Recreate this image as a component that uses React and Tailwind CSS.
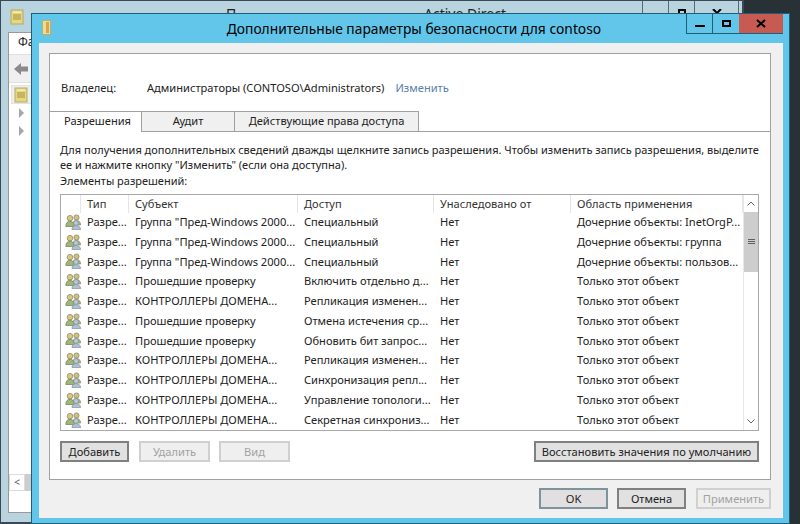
import React from 'react'

const rows = [
  ['Группа "Пред-Windows 2000...', 'Специальный', 'Дочерние объекты: InetOrgP...'],
  ['Группа "Пред-Windows 2000...', 'Специальный', 'Дочерние объекты: группа'],
  ['Группа "Пред-Windows 2000...', 'Специальный', 'Дочерние объекты: пользов...'],
  ['Прошедшие проверку', 'Включить отдельно д...', 'Только этот объект'],
  ['КОНТРОЛЛЕРЫ ДОМЕНА...', 'Репликация изменен...', 'Только этот объект'],
  ['Прошедшие проверку', 'Отмена истечения ср...', 'Только этот объект'],
  ['Прошедшие проверку', 'Обновить бит запрос...', 'Только этот объект'],
  ['КОНТРОЛЛЕРЫ ДОМЕНА...', 'Репликация изменен...', 'Только этот объект'],
  ['КОНТРОЛЛЕРЫ ДОМЕНА...', 'Синхронизация репл...', 'Только этот объект'],
  ['КОНТРОЛЛЕРЫ ДОМЕНА...', 'Управление топологи...', 'Только этот объект'],
  ['КОНТРОЛЛЕРЫ ДОМЕНА...', 'Секретная синхрониз...', 'Только этот объект'],
]

const cols = 'grid grid-cols-[20px_48px_169px_136px_137px_1fr]'

const UsersIcon = () => (
  <svg width="17" height="16" viewBox="0 0 17 16" className="blur-[0.3px]">
    <circle cx="11.5" cy="3.5" r="2.6" fill="#cfc083" stroke="#7c8260" strokeWidth="0.7" />
    <path d="M7.5 11c0-3 1.5-4.5 4-4.5s4 1.5 4 4.5z" fill="#adb986" stroke="#7c8260" strokeWidth="0.7" />
    <circle cx="5" cy="4.2" r="2.8" fill="#dcc680" stroke="#7c8260" strokeWidth="0.7" />
    <path d="M0.8 12.5c0-3.4 1.6-5.2 4.2-5.2s4.2 1.8 4.2 5.2z" fill="#a0b679" stroke="#6b8058" strokeWidth="0.7" />
    <circle cx="11" cy="9" r="2.4" fill="#bccad6" stroke="#7f8d9b" strokeWidth="0.7" />
    <path d="M7 15.6c0-2.6 1.6-4 4-4s4.6 1.4 4.6 4z" fill="#aec2d4" stroke="#7f8d9b" strokeWidth="0.7" />
  </svg>
)

const FolderIcon = ({ className }) => (
  <svg viewBox="0 0 14 16" className={className}>
    <rect x="1" y="1" width="12" height="14" fill="#e6d883" stroke="#b7aa62" />
    <rect x="3" y="5" width="8" height="6" fill="#c4b560" />
    <rect x="3" y="2.5" width="8" height="1.2" fill="#f8f2c4" />
  </svg>
)

const FolderSide = ({ className }) => (
  <svg viewBox="0 0 9 15" className={className}>
    <rect x="0.5" y="0.5" width="8" height="14" fill="#e9e08f" stroke="#b9b06a" />
    <rect x="4" y="2" width="3" height="11" fill="#e0a24e" />
  </svg>
)

const Btn = ({ children, w, kind }) => {
  const look =
    kind === 'off'
      ? 'border-[#d0d0d0] bg-[#efefef] text-[#a2a2a2]'
      : kind === 'ok'
        ? 'border-[#7f939f] bg-[#e1dfdf] text-[#222]'
        : 'border-[#808080] bg-[#e1e1e1] text-[#222]'
  return (
    <button className={`${w} h-[21px] border-2 flex items-center justify-center ${look}`}>{children}</button>
  )
}

export default function App() {
  return (
    <div className="relative w-[800px] h-[524px] overflow-hidden bg-[#283136] font-['Noto_Sans',sans-serif] text-[11.1px] leading-[15.6px] text-[#222]">
      {/* окно позади */}
      <div className="absolute left-0 top-0 w-[744px] h-[524px] border border-[#3a4a55] border-r-2 border-b-2 bg-[#b9d3df] flex flex-col">
        <div className="h-[31px] flex shrink-0 relative">
          <FolderIcon className="w-[14px] h-[16px] ml-[9px] mt-[8px] blur-[0.5px]" />
          <span className="absolute left-[225px] top-[5px] text-[14px]">П</span>
          <span className="absolute left-[423px] top-[5px] text-[14px] whitespace-nowrap">Active Direct</span>
          <div className="ml-auto flex h-[13px] mr-[3px]">
            <div className="w-[27px] border-x border-[#5a6a75]" />
            <div className="w-[26px] border-r border-[#5a6a75] flex justify-center pt-[8px]">
              <div className="w-[8px] h-[8px] border-2 border-black" />
            </div>
            <div className="w-[44px] border-r border-[#5a6a75] flex justify-center pt-[8px]">
              <svg width="10" height="5" viewBox="0 0 10 5"><path d="M1 0l4 4 4-4" fill="none" stroke="#000" strokeWidth="2" /></svg>
            </div>
          </div>
        </div>
        <div className="ml-[7px] mr-[6px] mb-[9px] flex-1 bg-white border border-[#9a9a9a] flex flex-col">
          <div className="h-[21px] pl-[9px] pt-[1px] text-[12px]">Фа</div>
          <div className="h-[29px] bg-[#f0f0f0] pl-[4px] flex items-center border-y border-[#e0e0e0]">
            <svg width="16" height="14" viewBox="0 0 16 14" className="blur-[0.4px]">
              <path d="M1 7 8 1v3.5h7v5H8V13z" fill="#8a8a8a" />
            </svg>
          </div>
          <div className="pl-[2px] pt-[2px]">
            <div className="h-[19px] bg-[#eeeeee] border border-[#e2e2e2] pl-[2px] flex items-center">
              <FolderIcon className="w-[14px] h-[16px] blur-[0.4px]" />
            </div>
            <div className="mt-[4px] ml-[8px] w-0 h-0 border-y-[5px] border-y-transparent border-l-[5px] border-l-[#a6a6a6]" />
            <div className="mt-[8px] ml-[8px] w-0 h-0 border-y-[5px] border-y-transparent border-l-[5px] border-l-[#a6a6a6]" />
          </div>
          <div className="mt-auto mb-[21px] h-[17px] flex">
            <div className="w-[16px] border border-[#dcdcdc] flex items-center justify-center text-[#555] text-[10px]">&lt;</div>
            <div className="flex-1 bg-[#cdcdcd]" />
          </div>
        </div>
      </div>

      {/* диалог */}
      <div className="absolute left-[31px] top-[13px] w-[759px] h-[511px] border border-[#1d5f78] bg-[#62c6ea] flex flex-col">
        <div className="h-[29px] flex shrink-0 relative">
          <FolderSide className="w-[9px] h-[15px] ml-[10px] mt-[6px] blur-[0.5px]" />
          <div className="absolute left-0 right-0 top-[5px] text-center text-[13.8px] leading-[20px] text-black pl-[7px]">
            Дополнительные параметры безопасности для contoso
          </div>
          <div className="ml-auto flex h-[20px] mr-[6px] relative border border-t-0 border-[#1d5f78] border-r-0">
            <div className="w-[26px] border-r border-[#1d5f78] flex justify-center items-center pt-[4px]">
              <div className="w-[10px] h-[2px] bg-black" />
            </div>
            <div className="w-[26px] flex justify-center items-center">
              <div className="w-[9px] h-[7px] border-2 border-black" />
            </div>
            <div className="w-[44px] bg-[#c75b52] flex justify-center items-center">
              <svg width="10" height="9" viewBox="0 0 10 9"><path d="M1 1l8 7M9 1 1 8" stroke="#000" strokeWidth="2" /></svg>
            </div>
          </div>
        </div>

        <div className="ml-[7px] mr-[6px] mb-[5px] flex-1 bg-[#f0f0f0] pl-[10px] pr-[12px] pt-[10px] flex flex-col">
          <div className="h-[427px] bg-white border border-[#a0a0a0] flex flex-col">
            <div className="h-[57px] shrink-0 flex pl-[11px] pt-[26px]">
              <span className="w-[86px]">Владелец:</span>
              <span>Администраторы (CONTOSO\Administrators)</span>
              <span className="ml-[11px] text-[#5a7fa8]">Изменить</span>
            </div>
            <div className="h-[21px] flex shrink-0">
              <div className="w-[92px] border-t border-r border-[#a0a0a0] pl-[14px] pt-[1px]">Разрешения</div>
              <div className="w-[93px] border border-l-0 border-[#a0a0a0] bg-[#f0f0f0] text-center pt-[1px]">Аудит</div>
              <div className="w-[184px] border border-l-0 border-[#a0a0a0] bg-[#f0f0f0] text-center pt-[1px]">Действующие права доступа</div>
              <div className="flex-1 border-b border-[#a0a0a0]" />
            </div>
            <div className="flex-1 pl-[10px] pr-[11px] pt-[10px] flex flex-col">
              <p className="whitespace-nowrap text-[11px] leading-[15.4px]">
                Для получения дополнительных сведений дважды щелкните запись разрешения. Чтобы изменить запись разрешения, выделите
                <br />
                ее и нажмите кнопку "Изменить" (если она доступна).
                <br />
                Элементы разрешений:
              </p>
              <div className="mt-[5.6px] h-[237px] border border-[#a8a8a8] flex">
                <div className="flex-1 min-w-0">
                  <div className={`${cols} h-[18px] text-[#333]`}>
                    <div className="border-r border-[#e5e5e5]" />
                    <div className="border-r border-[#e5e5e5] pl-[6px] pt-[1px]">Тип</div>
                    <div className="border-r border-[#e5e5e5] pl-[6px] pt-[1px]">Субъект</div>
                    <div className="border-r border-[#e5e5e5] pl-[6px] pt-[1px]">Доступ</div>
                    <div className="border-r border-[#e5e5e5] pl-[6px] pt-[1px]">Унаследовано от</div>
                    <div className="border-r border-[#e5e5e5] pl-[6px] pt-[1px]">Область применения</div>
                  </div>
                  <div className="-mt-px">
                    {rows.map((r, i) => (
                      <div key={i} className={`${cols} h-[19.8px] items-center whitespace-nowrap`}>
                        <div className="pl-[4px]"><UsersIcon /></div>
                        <div className="pl-[6px]">Разре...</div>
                        <div className="pl-[6px]">{r[0]}</div>
                        <div className="pl-[6px]">{r[1]}</div>
                        <div className="pl-[6px]">Нет</div>
                        <div className="pl-[6px]">{r[2]}</div>
                      </div>
                    ))}
                  </div>
                </div>
                <div className="w-[15px] border-l border-[#e8e8e8] flex flex-col">
                  <div className="h-[17px] flex items-center justify-center">
                    <svg width="8" height="5" viewBox="0 0 8 5"><path d="M.5 4.5 4 1l3.5 3.5" fill="none" stroke="#606060" /></svg>
                  </div>
                  <div className="h-[60px] bg-[#cdcdcd] flex flex-col items-center justify-center gap-[1px]">
                    <div className="w-[7px] h-[1px] bg-[#606060]" />
                    <div className="w-[7px] h-[1px] bg-[#606060]" />
                    <div className="w-[7px] h-[1px] bg-[#606060]" />
                  </div>
                  <div className="flex-1" />
                  <div className="h-[17px] flex items-center justify-center">
                    <svg width="8" height="5" viewBox="0 0 8 5"><path d="M.5.5 4 4 7.5.5" fill="none" stroke="#606060" /></svg>
                  </div>
                </div>
              </div>
              <div className="mt-[10px] flex">
                <Btn w="w-[69px]">Добавить</Btn>
                <div className="ml-[10px]"><Btn w="w-[71px]" kind="off">Удалить</Btn></div>
                <div className="ml-[9px]"><Btn w="w-[71px]" kind="off">Вид</Btn></div>
                <div className="ml-auto"><Btn w="w-[225px]">Восстановить значения по умолчанию</Btn></div>
              </div>
            </div>
          </div>
          <div className="mt-[8px] flex justify-end">
            <Btn w="w-[69px]" kind="ok">OK</Btn>
            <div className="ml-[9px]"><Btn w="w-[69px]">Отмена</Btn></div>
            <div className="ml-[10px]"><Btn w="w-[75px]" kind="off">Применить</Btn></div>
          </div>
        </div>
      </div>
    </div>
  )
}
